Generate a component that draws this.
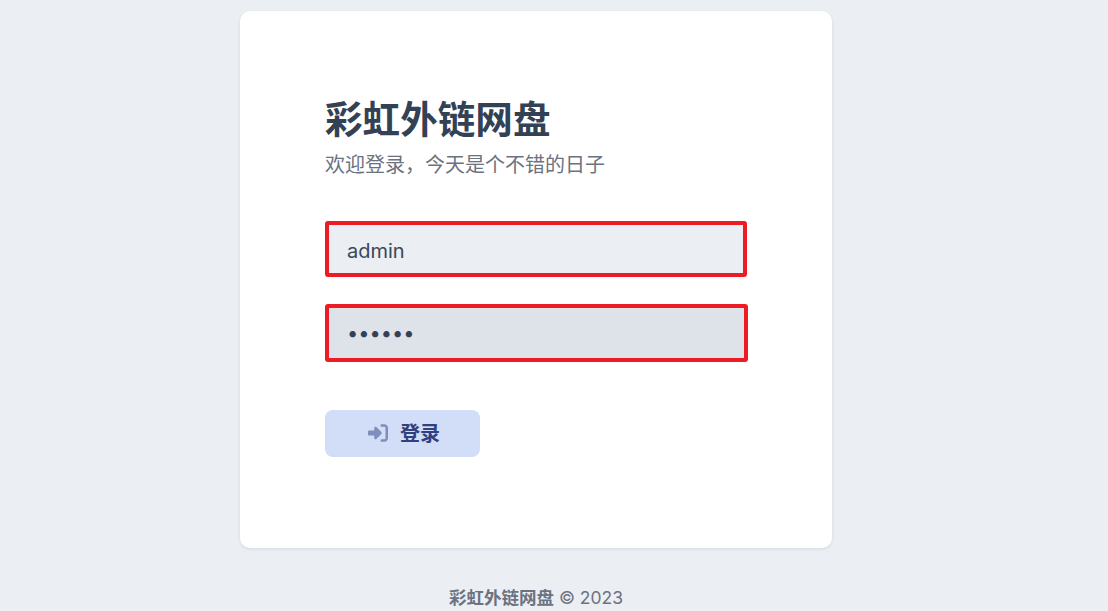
<script>
</script>

<div class="page">
  <main class="card">
    <h1>彩虹外链网盘</h1>
    <p class="sub">欢迎登录，今天是个不错的日子</p>
    <form class="form" onsubmit={(e) => e.preventDefault()}>
      <input class="field" type="text" value="admin" />
      <input class="field pw" type="password" value="123456" />
      <button class="btn" type="submit">
        <svg class="ico" viewBox="0 0 512 512" aria-hidden="true">
          <path d="M352 96h64c17.700 0 32 14.300 32 32v256c0 17.700-14.300 32-32 32h-64c-17.700 0-32 14.300-32 32s14.300 32 32 32h64c53 0 96-43 96-96V128c0-53-43-96-96-96h-64c-17.700 0-32 14.300-32 32s14.300 32 32 32zm-9.400 182.600c12.500-12.500 12.500-32.800 0-45.300l-128-128c-9.200-9.200-22.900-11.900-34.900-6.900S160 115 160 128v64H32c-17.700 0-32 14.300-32 32v64c0 17.700 14.300 32 32 32h128v64c0 12.900 7.800 24.600 19.800 29.600s25.700 2.200 34.900-6.900l128-128z"/>
        </svg>
        <span>登录</span>
      </button>
    </form>
  </main>
  <footer class="foot"><strong>彩虹外链网盘</strong> © 2023</footer>
</div>

<style>
  :global(body) {
    margin: 0;
    background: #ebeef3;
    font-family: Inter, "Noto Sans CJK SC", sans-serif;
    overflow: hidden;
  }
  .page {
    display: flex;
    flex-direction: column;
    align-items: center;
    width: 1072px;
    height: 611px;
    padding-top: 11px;
    box-sizing: border-box;
  }
  .card {
    width: 592px;
    height: 537px;
    box-sizing: border-box;
    padding: 85px 85px 0;
    background: #fff;
    border-radius: 10px;
    box-shadow: 0 1px 3px rgba(60, 75, 100, 0.12);
  }
  h1 {
    margin: 0;
    font-size: 37.6px;
    line-height: 48px;
    font-weight: 700;
    color: #334155;
  }
  .sub {
    margin: 6px 0 0;
    font-size: 20px;
    line-height: 30px;
    color: #6b7280;
  }
  .form {
    display: flex;
    flex-direction: column;
    align-items: flex-start;
    margin-top: 41px;
  }
  .field {
    width: 422px;
    height: 56px;
    box-sizing: border-box;
    padding: 3px 18px 0;
    border: 4px solid #ed1c24;
    border-radius: 3px;
    background: #ebeef3;
    color: #3a4759;
    font: 400 20px Inter, sans-serif;
    outline: none;
  }
  .pw {
    margin-top: 27px;
    width: 423px;
    height: 58px;
    padding-top: 0;
    background: #dee2e9;
    color: #334155;
  }
  .btn {
    display: flex;
    align-items: center;
    justify-content: center;
    gap: 12px;
    width: 155px;
    height: 47px;
    margin-top: 48px;
    border: 0;
    border-radius: 8px;
    background: #d2ddf7;
    color: #2f4180;
    font: 700 20px Inter, "Noto Sans CJK SC", sans-serif;
    padding: 0 0 2px 3px;
  }
  .ico {
    width: 20px;
    height: 20px;
    fill: #2f4180;
    opacity: 0.5;
  }
  .foot {
    margin-top: 37px;
    font-size: 17.5px;
    line-height: 26px;
    color: #6b7280;
  }
</style>
